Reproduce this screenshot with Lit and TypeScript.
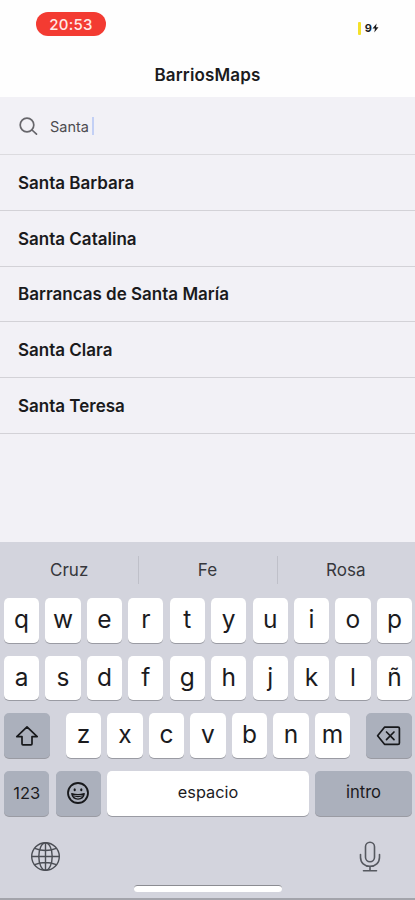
import { LitElement, html, css } from "lit";
import { customElement, property } from "lit/decorators.js";

@customElement("status-bar")
class StatusBar extends LitElement {
  static styles = css`
    :host { display: flex; justify-content: space-between; align-items: flex-start; height: 52px; padding: 12px 36px 0; box-sizing: border-box; }
    .time { width: 70px; height: 24px; border-radius: 12px; background: #f33b32; color: #ffe9e6; font-size: 15px; font-weight: 500; line-height: 25px; text-align: center; letter-spacing: 0.3px; }
    .battery { display: flex; align-items: center; height: 14px; margin-top: 9px; font-size: 11px; font-weight: 700; color: #1c1c1e; }
    .level { width: 3px; height: 13px; border-radius: 1px; background: #f5e12a; margin-right: 4px; }
    svg { display: block; }
  `;
  render() {
    return html`<div class="time">20:53</div>
      <div class="battery">
        <span class="level"></span><span>9</span>
        <svg width="7" height="10" viewBox="0 0 7 10"><path d="M4.6 .5 .5 5.6H3L2.3 9.5 6.5 4.3H4z" fill="#1c1c1e" /></svg>
      </div>`;
  }
}

@customElement("search-field")
class SearchField extends LitElement {
  @property() value = "";
  static styles = css`
    :host { display: flex; align-items: center; height: 58px; padding: 0 19px; box-sizing: border-box; border-bottom: 1px solid #dcdbdf; }
    svg { display: block; margin-right: 12px; margin-top: 1px; }
    .text { font-size: 14.5px; color: #4d4c50; margin-top: 1px; }
    .caret { width: 2px; height: 18px; margin-left: 3px; background: #c3d0f5; }
  `;
  render() {
    return html`<svg width="19" height="19" viewBox="0 0 19 19" fill="none" stroke="#67666b" stroke-width="1.7" stroke-linecap="round">
        <circle cx="8" cy="8" r="6.8" /><path d="m13 13 4.5 4.2" />
      </svg>
      <span class="text">${this.value}</span><span class="caret"></span>`;
  }
}

const glyphs: Record<string, unknown> = {
  shift: html`<svg width="24" height="22" viewBox="0 0 24 22" fill="none" stroke="#17181b" stroke-width="1.7" stroke-linejoin="round"><path d="M12 1.8 1.8 11.6H7v7.2q0 1 1 1h8q1 0 1-1v-7.2h5.2z" /></svg>`,
  erase: html`<svg width="25" height="20" viewBox="0 0 25 20" fill="none" stroke="#17181b" stroke-width="1.7" stroke-linejoin="round"><path d="M8.5 1.2H22q1.4 0 1.4 1.4v14.3q0 1.4-1.4 1.4H8.5L1.6 9.8z" /><path d="m10.5 6 7.5 7.6m0-7.6-7.5 7.6" stroke-linecap="round" /></svg>`,
  emoji: html`<svg width="24" height="24" viewBox="0 0 24 24" fill="none" stroke="#17181b"><circle cx="12" cy="12" r="10" stroke-width="1.8" /><ellipse cx="8.7" cy="8.8" rx="1.1" ry="1.5" fill="#17181b" stroke="none" /><ellipse cx="15.3" cy="8.8" rx="1.1" ry="1.5" fill="#17181b" stroke="none" /><path d="M5.8 12.7q6.2 1.8 12.4 0c-.5 3.3-3 5.4-6.2 5.4s-5.7-2.1-6.2-5.4z" stroke-width="1.4" stroke-linejoin="round" /><path d="M7 14.8q5 1.6 10 0" stroke-width="1.1" /></svg>`,
};

@customElement("soft-keyboard")
class SoftKeyboard extends LitElement {
  static styles = css`
    :host { display: flex; flex-direction: column; height: 358px; box-sizing: border-box; background: #d3d4dd; border-bottom: 2px solid #a3a4ab; color: #1b1b1e; }
    .suggestions { display: grid; grid-template-columns: repeat(3, 1fr); height: 56px; }
    .suggestion { display: flex; align-items: center; justify-content: center; font-size: 17px; color: #36373c; position: relative; }
    .suggestion + .suggestion::before { content: ""; position: absolute; left: 0; top: 14px; height: 28px; width: 1px; background: #bfc0c9; }
    .rows { display: flex; flex-direction: column; gap: 13px; padding: 0 3px 0 4px; }
    .row { display: flex; justify-content: space-between; }
    .key { display: flex; align-items: center; justify-content: center; box-sizing: border-box; width: 35.2px; height: 44.7px; padding-bottom: 3px; border-radius: 5px; background: #fff; box-shadow: 0 1px 0.5px #9a9ba3; font-size: 24.5px; }
    .letters { display: flex; gap: 6.3px; }
    .letters .key { padding-bottom: 4px; }
    .dark { background: #abb0bc; padding-bottom: 0; }
    .modifier { width: 46.3px; }
    .small { width: 45.4px; font-size: 16.5px; }
    .space { width: 201.5px; font-size: 16.3px; padding-bottom: 2px; }
    .enter { width: 97px; font-size: 16.6px; padding-bottom: 2px; }
    .footer { display: flex; justify-content: space-between; padding: 25px 33px 0 30px; height: 60px; box-sizing: border-box; }
    .footer svg { display: block; }
    .home { width: 148px; height: 7px; margin: 9px auto 0; border-radius: 4px; background: #fff; border-top: 1px solid #8b8c92; box-sizing: border-box; }
  `;
  private keys(letters: string) {
    return [...letters].map((letter) => html`<div class="key">${letter}</div>`);
  }
  render() {
    return html`
      <div class="suggestions">${["Cruz", "Fe", "Rosa"].map((word) => html`<div class="suggestion">${word}</div>`)}</div>
      <div class="rows">
        <div class="row">${this.keys("qwertyuiop")}</div>
        <div class="row">${this.keys("asdfghjklñ")}</div>
        <div class="row">
          <div class="key dark modifier">${glyphs.shift}</div>
          <div class="letters">${this.keys("zxcvbnm")}</div>
          <div class="key dark modifier">${glyphs.erase}</div>
        </div>
        <div class="row">
          <div class="key dark small">123</div>
          <div class="key dark small">${glyphs.emoji}</div>
          <div class="key space">espacio</div>
          <div class="key dark enter">intro</div>
        </div>
      </div>
      <div class="footer">
        <svg width="31" height="31" viewBox="0 0 31 31" fill="none" stroke="#4b4e55" stroke-width="1.4"><circle cx="15.5" cy="15.5" r="13.8" /><ellipse cx="15.5" cy="15.5" rx="6.7" ry="13.8" /><path d="M15.5 1.7v27.6M1.7 15.5h27.6M4.7 7.3q10.8 4.3 21.6 0M4.7 23.7q10.8-4.3 21.6 0" /></svg>
        <svg width="24" height="33" viewBox="0 0 24 33" fill="none" stroke="#565960" stroke-width="1.6" stroke-linecap="round"><rect x="7.5" y="1.2" width="9" height="19.5" rx="4.5" /><path d="M2.5 13.5v2.8c0 5.4 4 9 9.5 9s9.5-3.6 9.5-9v-2.8M12 25.3v4.4M5.5 29.8h13" /></svg>
      </div>
      <div class="home"></div>`;
  }
}

@customElement("app-root")
class AppRoot extends LitElement {
  private places = ["Santa Barbara", "Santa Catalina", "Barrancas de Santa María", "Santa Clara", "Santa Teresa"];
  static styles = css`
    :host { display: flex; flex-direction: column; height: 900px; overflow: hidden; background: #f2f1f6; font-family: Inter, "Liberation Sans", sans-serif; }
    header { height: 97px; background: #fefefe; }
    h1 { margin: 0; text-align: center; font-size: 17px; font-weight: 600; line-height: 46px; letter-spacing: 0.15px; color: #1b1b1d; }
    .list { flex: 1; }
    .item { display: flex; align-items: center; height: 55.8px; padding: 1px 0 0 18px; box-sizing: border-box; border-bottom: 1px solid #d3d2d7; font-size: 17px; font-weight: 600; color: #1a1a1c; }
  `;
  render() {
    return html`
      <header><status-bar></status-bar><h1>BarriosMaps</h1></header>
      <search-field value="Santa"></search-field>
      <div class="list">${this.places.map((place) => html`<div class="item">${place}</div>`)}</div>
      <soft-keyboard></soft-keyboard>`;
  }
}
